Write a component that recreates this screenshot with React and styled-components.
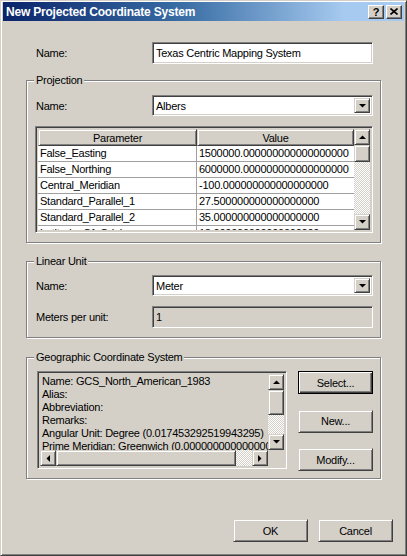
import React from 'react'
import styled, { createGlobalStyle } from 'styled-components'

const GlobalStyle = createGlobalStyle`
  html, body {
    margin: 0;
    padding: 0;
    background: #d4d0c8;
  }
  body {
    font-family: "Liberation Sans", Arial, sans-serif;
    font-size: 11px;
    letter-spacing: -0.25px;
    color: #000;
  }
`

const face = '#d4d0c8'
const dither = `repeating-conic-gradient(#d4d0c8 0 25%, #ffffff 0 50%) 0 0 / 2px 2px`

const Window = styled.div`
  width: 407px;
  height: 556px;
  box-sizing: border-box;
  background: ${face};
  border: 1px solid;
  border-color: ${face} #404040 #404040 ${face};
  box-shadow: inset 1px 1px 0 #fff, inset -1px -1px 0 #808080;
  padding: 1px 2px 2px 2px;
  display: flex;
  flex-direction: column;
`
const TitleBar = styled.div`
  height: 19px;
  display: flex;
  align-items: center;
  padding: 0 2px 0 3px;
  background: linear-gradient(to right, #0a246a 0%, #3a6ea5 45%, #a6caf0 85%, #a6caf0 100%);
`
const TitleText = styled.div`
  flex: 1;
  color: #fff;
  font-weight: bold;
  font-size: 12px;
  letter-spacing: -0.2px;
`
const CaptionButton = styled.div`
  width: 16px;
  height: 14px;
  box-sizing: border-box;
  background: ${face};
  border: 1px solid;
  border-color: #fff #404040 #404040 #fff;
  box-shadow: inset -1px -1px 0 #808080;
  display: flex;
  align-items: center;
  justify-content: center;
  font-weight: bold;
  font-size: 11px;
  margin-left: ${p => p.$gap || 0}px;
`
const Main = styled.div`
  width: 355px;
  margin-left: 23px;
  margin-top: 21px;
  display: flex;
  flex-direction: column;
`
const Row = styled.div`
  display: flex;
  align-items: center;
  padding-left: ${p => p.$indent || 0}px;
  margin-top: ${p => p.$top || 0}px;
`
const Label = styled.div`
  width: 116px;
`
const Group = styled.div`
  position: relative;
  margin-top: ${p => p.$top}px;
  border: 1px solid #808080;
  box-shadow: inset 1px 1px 0 #fff, 1px 1px 0 #fff;
  padding: ${p => p.$pad};
`
const Legend = styled.div`
  position: absolute;
  top: -7px;
  left: 7px;
  padding: 0 2px;
  line-height: 13px;
  background: ${face};
`
const Sunken = styled.div`
  box-sizing: border-box;
  border: 1px solid;
  border-color: #808080 #fff #fff #808080;
  box-shadow: inset 1px 1px 0 #404040, inset -1px -1px 0 ${face};
`
const TextField = styled(Sunken)`
  width: 221px;
  height: 22px;
  background: ${p => (p.$disabled ? face : '#fff')};
  padding: 3px 3px 0 3px;
  line-height: 14px;
  white-space: nowrap;
`
const Combo = styled(Sunken)`
  width: 221px;
  height: 21px;
  background: #fff;
  padding: 2px;
  display: flex;
  align-items: stretch;
`
const ComboText = styled.div`
  flex: 1;
  padding-left: 1px;
  line-height: 16px;
`
const RaisedBox = styled.div`
  box-sizing: border-box;
  background: ${face};
  border: 1px solid;
  border-color: ${face} #404040 #404040 ${face};
  box-shadow: inset 1px 1px 0 #fff, inset -1px -1px 0 #808080;
  display: flex;
  align-items: center;
  justify-content: center;
`
const DropButton = styled(RaisedBox)`
  width: 16px;
`
const ScrollButton = styled(RaisedBox)`
  width: 16px;
  height: 16px;
  flex: none;
`
const Thumb = styled(RaisedBox)`
  flex: none;
  ${p => (p.$vertical ? `height: ${p.$size}px;` : `width: ${p.$size}px;`)}
`
const Track = styled.div`
  flex: 1;
  background: ${dither};
`
const VScroll = styled.div`
  width: 16px;
  display: flex;
  flex-direction: column;
`
const HScroll = styled.div`
  height: 16px;
  display: flex;
`
const Table = styled(Sunken)`
  width: 338px;
  height: 107px;
  margin-top: 10px;
  margin-left: -1px;
  padding: 2px;
  background: ${face};
  display: flex;
`
const Grid = styled.div`
  flex: 1;
  overflow: hidden;
  background: #fff;
`
const HeaderRow = styled.div`
  display: grid;
  grid-template-columns: 159px 1fr;
  height: 17px;
`
const HeaderCell = styled(RaisedBox)`
  height: 17px;
`
const DataRow = styled.div`
  display: grid;
  grid-template-columns: 159px 1fr;
  height: 16px;
  box-sizing: border-box;
  border-bottom: 1px solid #a0a0a0;
`
const Cell = styled.div`
  padding-left: 2px;
  line-height: 15px;
  white-space: nowrap;
  overflow: hidden;
  border-right: ${p => (p.$first ? '1px solid #a0a0a0' : 'none')};
`
const GroupBody = styled.div`
  display: flex;
  justify-content: space-between;
`
const ListBox = styled(Sunken)`
  width: 250px;
  height: 98px;
  margin-left: 1px;
  padding: 2px;
  display: grid;
  grid-template-columns: 1fr 16px;
  grid-template-rows: 1fr 16px;
`
const ListText = styled.div`
  overflow: hidden;
  white-space: nowrap;
  padding: 1px 0 0 2px;
  line-height: 13px;
`
const Corner = styled.div`
  background: ${face};
`
const ButtonColumn = styled.div`
  display: flex;
  flex-direction: column;
  justify-content: space-between;
  height: 100px;
  margin-right: 7px;
`
const Button = styled(RaisedBox)`
  width: 75px;
  height: 23px;
  ${p =>
    p.$default &&
    `border: 1px solid #000;
     box-shadow: inset 1px 1px 0 #fff, inset -1px -1px 0 #404040, inset -2px -2px 0 #808080;`}
`
const Footer = styled.div`
  display: flex;
  justify-content: flex-end;
  gap: 10px;
  margin-top: 40px;
  padding-right: 11px;
`

const Arrow = ({ dir }) => {
  const pts = {
    up: '0,4 7,4 3.5,0.5',
    down: '0,0 7,0 3.5,3.5',
    left: '4,0 4,7 0.5,3.5',
    right: '0,0 0,7 3.5,3.5',
  }[dir]
  const vertical = dir === 'up' || dir === 'down'
  return (
    <svg width={vertical ? 7 : 4} height={vertical ? 4 : 7} viewBox={vertical ? '0 0 7 4' : '0 0 4 7'}>
      <polygon points={pts} fill="#000" />
    </svg>
  )
}

const params = [
  ['False_Easting', '1500000.000000000000000000'],
  ['False_Northing', '6000000.000000000000000000'],
  ['Central_Meridian', '-100.000000000000000000'],
  ['Standard_Parallel_1', '27.500000000000000000'],
  ['Standard_Parallel_2', '35.000000000000000000'],
  ['Latitude_Of_Origin', '18.000000000000000000'],
]

const gcsLines = [
  'Name: GCS_North_American_1983',
  'Alias:',
  'Abbreviation:',
  'Remarks:',
  'Angular Unit: Degree (0.017453292519943295)',
  'Prime Meridian: Greenwich (0.000000000000000000000000)',
]

const App = () => {
  return (
    <>
      <GlobalStyle />
      <Window>
        <TitleBar>
          <TitleText>New Projected Coordinate System</TitleText>
          <CaptionButton>?</CaptionButton>
          <CaptionButton $gap={2}>
            <svg width="8" height="7" viewBox="0 0 8 7">
              <path d="M0.5 0.5 L7.5 6.5 M7.5 0.5 L0.5 6.5" stroke="#000" strokeWidth="1.6" />
            </svg>
          </CaptionButton>
        </TitleBar>

        <Main>
          <Row $indent={10}>
            <Label>Name:</Label>
            <TextField>Texas Centric Mapping System</TextField>
          </Row>

          <Group $top={16} $pad="14px 7px 9px 9px">
            <Legend>Projection</Legend>
            <Row>
              <Label>Name:</Label>
              <Combo>
                <ComboText>Albers</ComboText>
                <DropButton><Arrow dir="down" /></DropButton>
              </Combo>
            </Row>
            <Table>
              <Grid>
                <HeaderRow>
                  <HeaderCell>Parameter</HeaderCell>
                  <HeaderCell>Value</HeaderCell>
                </HeaderRow>
                {params.map(([name, value]) => (
                  <DataRow key={name}>
                    <Cell $first>{name}</Cell>
                    <Cell>{value}</Cell>
                  </DataRow>
                ))}
              </Grid>
              <VScroll>
                <ScrollButton><Arrow dir="up" /></ScrollButton>
                <Thumb $vertical $size={17} />
                <Track />
                <ScrollButton><Arrow dir="down" /></ScrollButton>
              </VScroll>
            </Table>
          </Group>

          <Group $top={18} $pad="13px 7px 9px 9px">
            <Legend>Linear Unit</Legend>
            <Row>
              <Label>Name:</Label>
              <Combo>
                <ComboText>Meter</ComboText>
                <DropButton><Arrow dir="down" /></DropButton>
              </Combo>
            </Row>
            <Row $top={10}>
              <Label>Meters per unit:</Label>
              <TextField $disabled>1</TextField>
            </Row>
          </Group>

          <Group $top={19} $pad="13px 0 7px 9px">
            <Legend>Geographic Coordinate System</Legend>
            <GroupBody>
              <ListBox>
                <ListText>
                  {gcsLines.map(line => (
                    <div key={line}>{line}</div>
                  ))}
                </ListText>
                <VScroll>
                  <ScrollButton><Arrow dir="up" /></ScrollButton>
                  <Thumb $vertical $size={25} />
                  <Track />
                  <ScrollButton><Arrow dir="down" /></ScrollButton>
                </VScroll>
                <HScroll>
                  <ScrollButton><Arrow dir="left" /></ScrollButton>
                  <Thumb $size={180} />
                  <Track />
                  <ScrollButton><Arrow dir="right" /></ScrollButton>
                </HScroll>
                <Corner />
              </ListBox>
              <ButtonColumn>
                <Button $default>Select...</Button>
                <Button>New...</Button>
                <Button>Modify...</Button>
              </ButtonColumn>
            </GroupBody>
          </Group>
        </Main>

        <Footer>
          <Button>OK</Button>
          <Button>Cancel</Button>
        </Footer>
      </Window>
    </>
  )
}

export default App
